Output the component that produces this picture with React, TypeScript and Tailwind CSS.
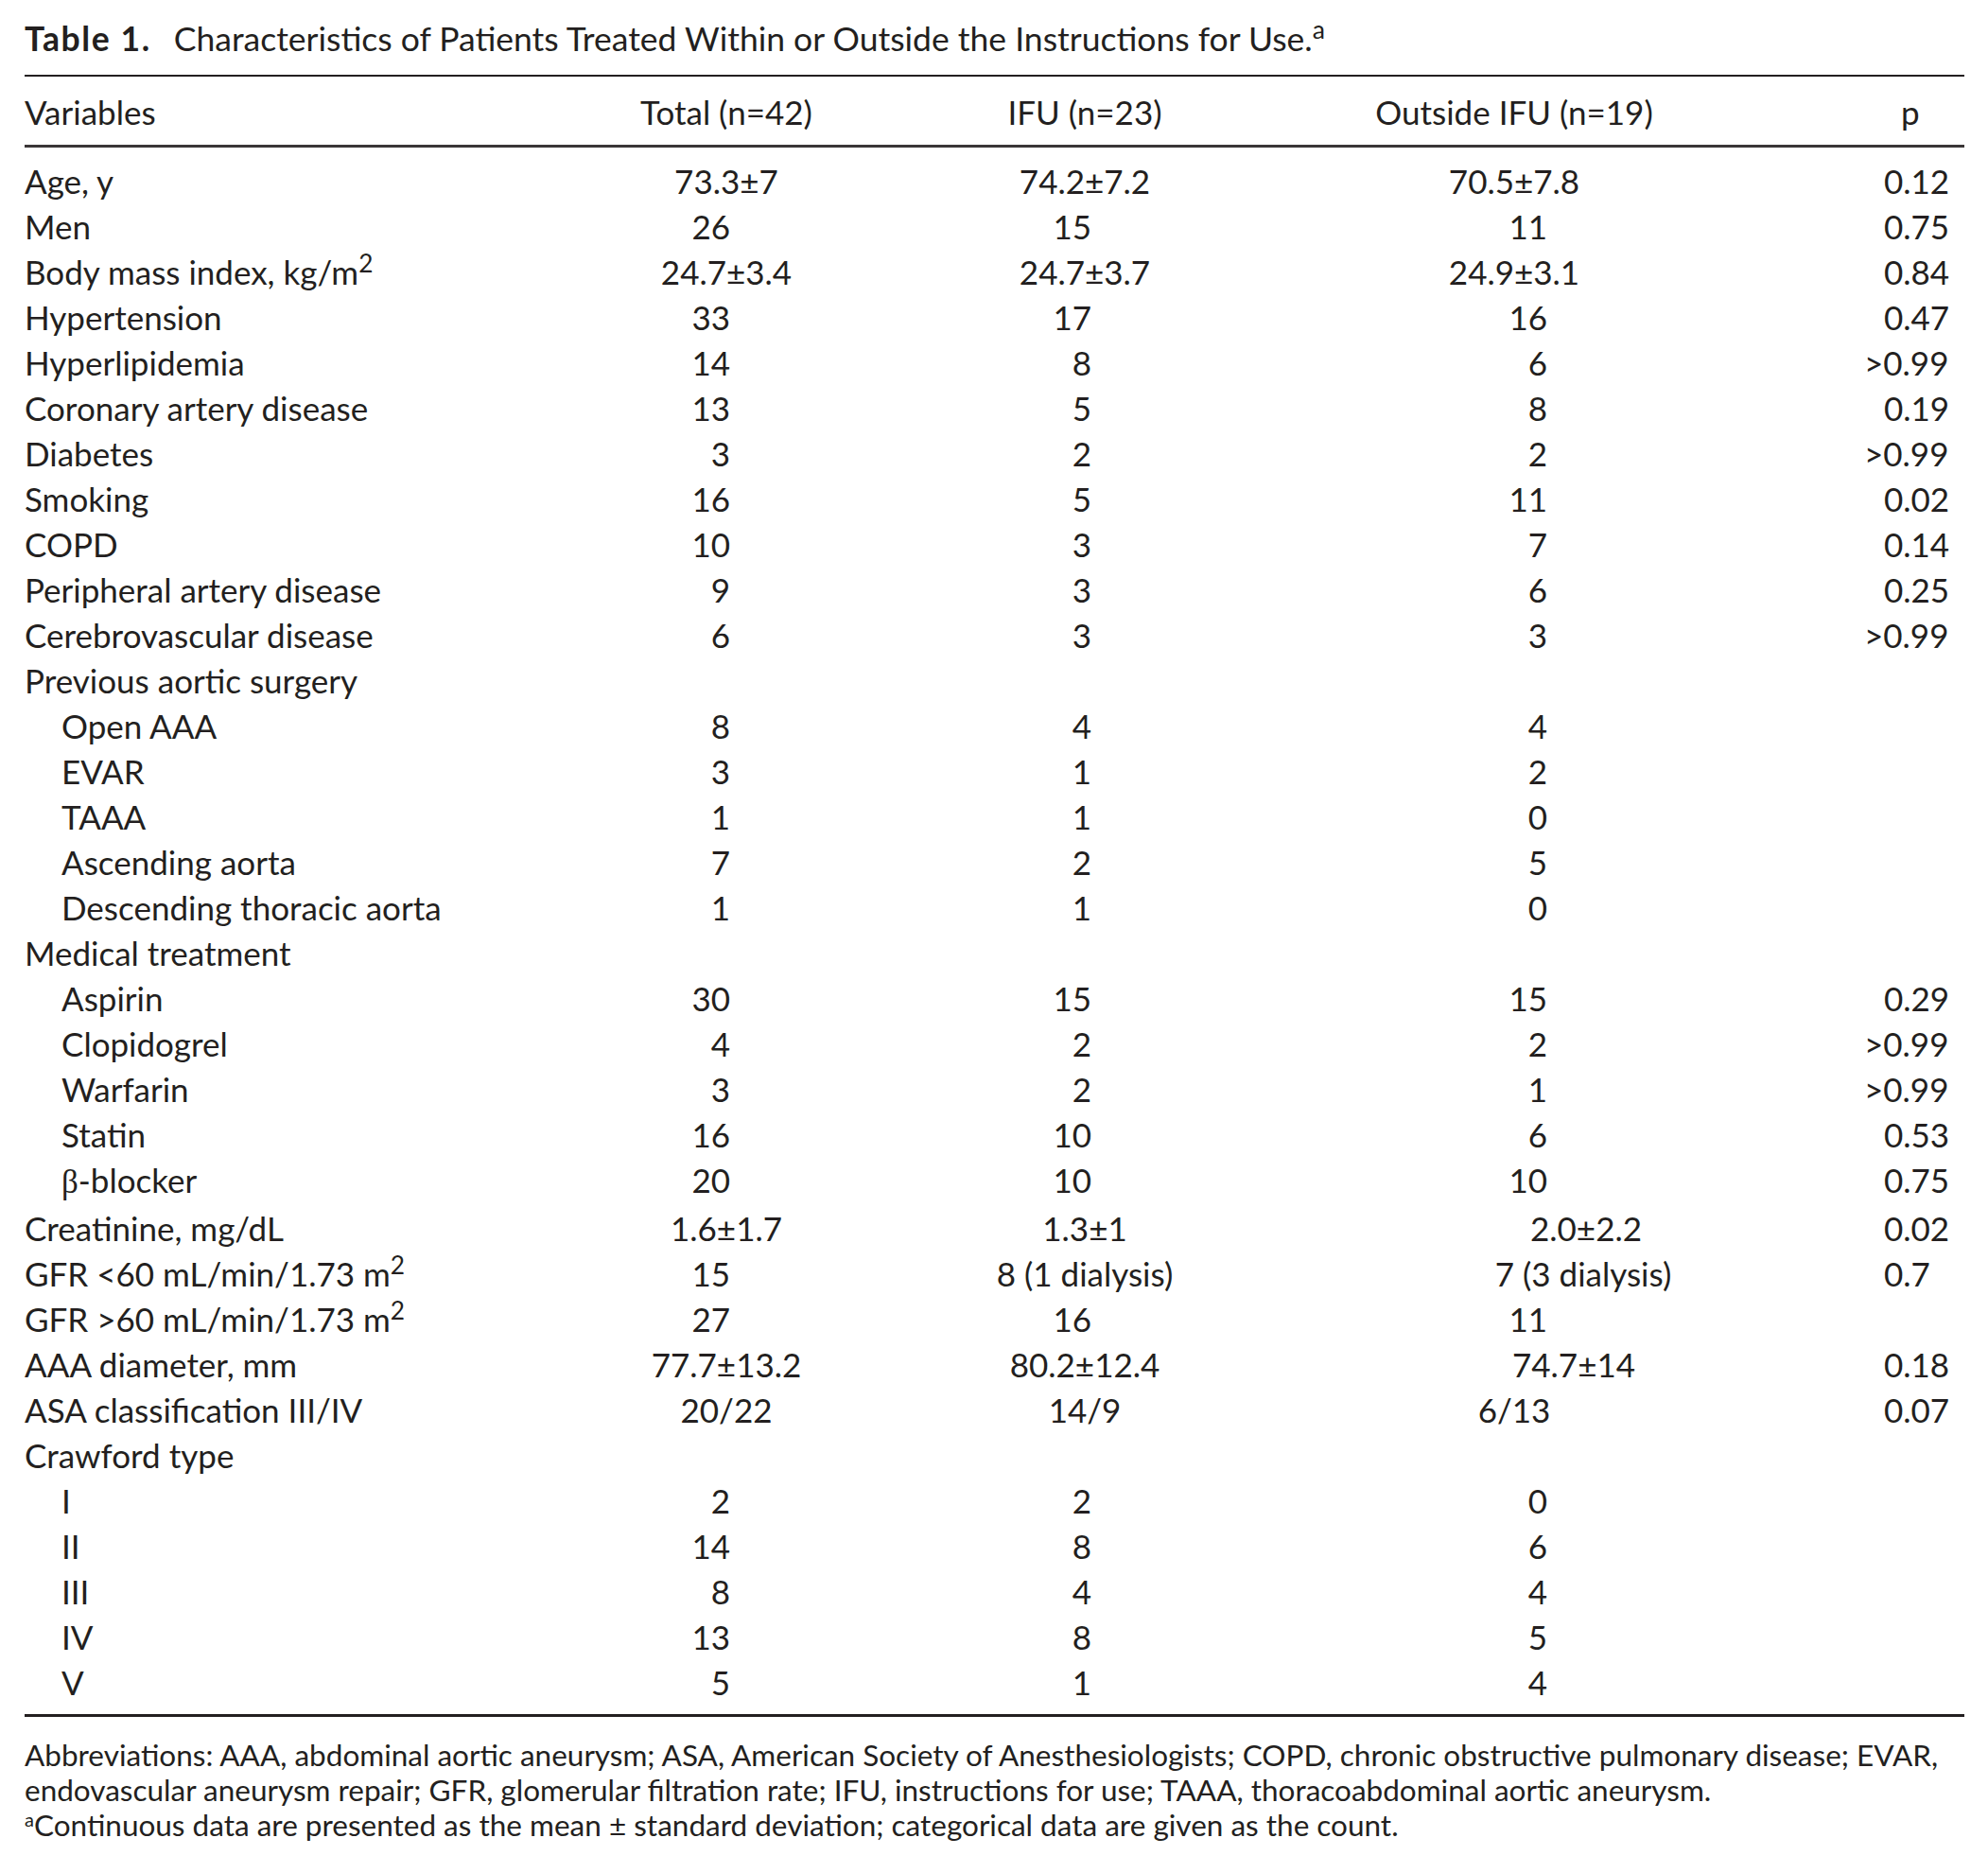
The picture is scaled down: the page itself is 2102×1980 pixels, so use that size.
import React from 'react';

type Col = 'total' | 'ifu' | 'out';
type Cell = string | { v: string; c: string };

interface Row {
    label: React.ReactNode;
    sub?: boolean;
    total?: Cell;
    ifu?: Cell;
    out?: Cell;
    p?: string;
}

// integers sit right-aligned inside each column, everything else is centred
const intCls: Record<Col, string> = {
    total: 'text-right pr-[204px]',
    ifu: 'text-right pr-[164px]',
    out: 'text-right pr-[248px]',
};

const rows: Row[] = [
    { label: 'Age, y', total: '73.3±7', ifu: '74.2±7.2', out: '70.5±7.8', p: '0.12' },
    { label: 'Men', total: '26', ifu: '15', out: '11', p: '0.75' },
    {
        label: (
            <>
                Body mass index, kg/m<sup>2</sup>
            </>
        ),
        total: '24.7±3.4',
        ifu: '24.7±3.7',
        out: '24.9±3.1',
        p: '0.84',
    },
    { label: 'Hypertension', total: '33', ifu: '17', out: '16', p: '0.47' },
    { label: 'Hyperlipidemia', total: '14', ifu: '8', out: '6', p: '>0.99' },
    { label: 'Coronary artery disease', total: '13', ifu: '5', out: '8', p: '0.19' },
    { label: 'Diabetes', total: '3', ifu: '2', out: '2', p: '>0.99' },
    { label: 'Smoking', total: '16', ifu: '5', out: '11', p: '0.02' },
    { label: 'COPD', total: '10', ifu: '3', out: '7', p: '0.14' },
    { label: 'Peripheral artery disease', total: '9', ifu: '3', out: '6', p: '0.25' },
    { label: 'Cerebrovascular disease', total: '6', ifu: '3', out: '3', p: '>0.99' },
    { label: 'Previous aortic surgery' },
    { label: 'Open AAA', sub: true, total: '8', ifu: '4', out: '4' },
    { label: 'EVAR', sub: true, total: '3', ifu: '1', out: '2' },
    { label: 'TAAA', sub: true, total: '1', ifu: '1', out: '0' },
    { label: 'Ascending aorta', sub: true, total: '7', ifu: '2', out: '5' },
    { label: 'Descending thoracic aorta', sub: true, total: '1', ifu: '1', out: '0' },
    { label: 'Medical treatment' },
    { label: 'Aspirin', sub: true, total: '30', ifu: '15', out: '15', p: '0.29' },
    { label: 'Clopidogrel', sub: true, total: '4', ifu: '2', out: '2', p: '>0.99' },
    { label: 'Warfarin', sub: true, total: '3', ifu: '2', out: '1', p: '>0.99' },
    { label: 'Statin', sub: true, total: '16', ifu: '10', out: '6', p: '0.53' },
    {
        label: (
            <>
                <span className="font-['Liberation_Serif',serif]">β</span>-blocker
            </>
        ),
        sub: true,
        total: '20',
        ifu: '10',
        out: '10',
        p: '0.75',
    },
    {
        label: 'Creatinine, mg/dL',
        total: '1.6±1.7',
        ifu: '1.3±1',
        out: { v: '2.0±2.2', c: 'text-center pl-[152px]' },
        p: '0.02',
    },
    {
        label: (
            <>
                GFR &lt;60 mL/min/1.73 m<sup>2</sup>
            </>
        ),
        total: '15',
        ifu: '8 (1 dialysis)',
        out: { v: '7 (3 dialysis)', c: 'text-center pl-[146px]' },
        p: '0.7',
    },
    {
        label: (
            <>
                GFR &gt;60 mL/min/1.73 m<sup>2</sup>
            </>
        ),
        total: '27',
        ifu: '16',
        out: '11',
    },
    {
        label: 'AAA diameter, mm',
        total: '77.7±13.2',
        ifu: '80.2±12.4',
        out: { v: '74.7±14', c: 'text-center pl-[126px]' },
        p: '0.18',
    },
    { label: 'ASA classification III/IV', total: '20/22', ifu: '14/9', out: '6/13', p: '0.07' },
    { label: 'Crawford type' },
    { label: 'I', sub: true, total: '2', ifu: '2', out: '0' },
    { label: 'II', sub: true, total: '14', ifu: '8', out: '6' },
    { label: 'III', sub: true, total: '8', ifu: '4', out: '4' },
    { label: 'IV', sub: true, total: '13', ifu: '8', out: '5' },
    { label: 'V', sub: true, total: '5', ifu: '1', out: '4' },
];

function ValueCell({ cell, col }: { cell?: Cell; col: Col }) {
    if (cell === undefined) return <div />;
    if (typeof cell !== 'string') return <div className={cell.c}>{cell.v}</div>;
    const cls = /^\d+$/.test(cell) ? intCls[col] : 'text-center';
    return <div className={cls}>{cell}</div>;
}

function PValue({ p }: { p?: string }) {
    if (!p) return <div />;
    return (
        <div className="pl-[108px]">
            {p.startsWith('>') ? (
                <>
                    <span className="-ml-[21px]">&gt;</span>
                    {p.slice(1)}
                </>
            ) : (
                p
            )}
        </div>
    );
}

const gridCols = 'grid grid-cols-[534px_416px_342px_566px_193px]';

export default function App() {
    return (
        <div className="w-[2102px] min-h-[1980px] bg-white pl-[26px] pr-[25px] pt-[17px] font-[Lato,sans-serif] text-[#231f20]">
            {/* Caption */}
            <div className="text-[35.5px] leading-[48px] whitespace-nowrap">
                <span className="font-bold tracking-[1.6px]">Table 1.</span>
                <span className="ml-[24px]">
                    Characteristics of Patients Treated Within or Outside the Instructions for Use.
                    <sup>a</sup>
                </span>
            </div>

            <div className="mt-[14px] h-[2px] bg-[#231f20]" />

            {/* Column headings */}
            <div className={`${gridCols} pt-[13px] pb-[11px] text-[35px] leading-[48px]`}>
                <div>Variables</div>
                <div className="text-center">Total (n=42)</div>
                <div className="text-center">IFU (n=23)</div>
                <div className="text-center">Outside IFU (n=19)</div>
                <div className="pl-[126px]">p</div>
            </div>

            <div className="h-[3px] bg-[#3a3637]" />

            {/* Body */}
            <div className="pt-[11px] pb-[10px] text-[35px] leading-[48px]">
                {rows.map((r, i) => (
                    <div key={i} className={`${gridCols} whitespace-nowrap`}>
                        <div className={r.sub ? 'pl-[39px]' : ''}>{r.label}</div>
                        <ValueCell cell={r.total} col="total" />
                        <ValueCell cell={r.ifu} col="ifu" />
                        <ValueCell cell={r.out} col="out" />
                        <PValue p={r.p} />
                    </div>
                ))}
            </div>

            <div className="h-[3px] bg-[#231f20]" />

            {/* Footnotes */}
            <div className="mt-[22px] text-[31.5px] leading-[37px] whitespace-nowrap">
                <p>
                    Abbreviations: AAA, abdominal aortic aneurysm; ASA, American Society of Anesthesiologists;
                    COPD, chronic obstructive pulmonary disease; EVAR,
                    <br />
                    endovascular aneurysm repair; GFR, glomerular filtration rate; IFU, instructions for use;
                    TAAA, thoracoabdominal aortic aneurysm.
                </p>
                <p>
                    <sup className="text-[20px] -top-[10px]">a</sup>Continuous data are presented as the mean ±
                    standard deviation; categorical data are given as the count.
                </p>
            </div>
        </div>
    );
}
